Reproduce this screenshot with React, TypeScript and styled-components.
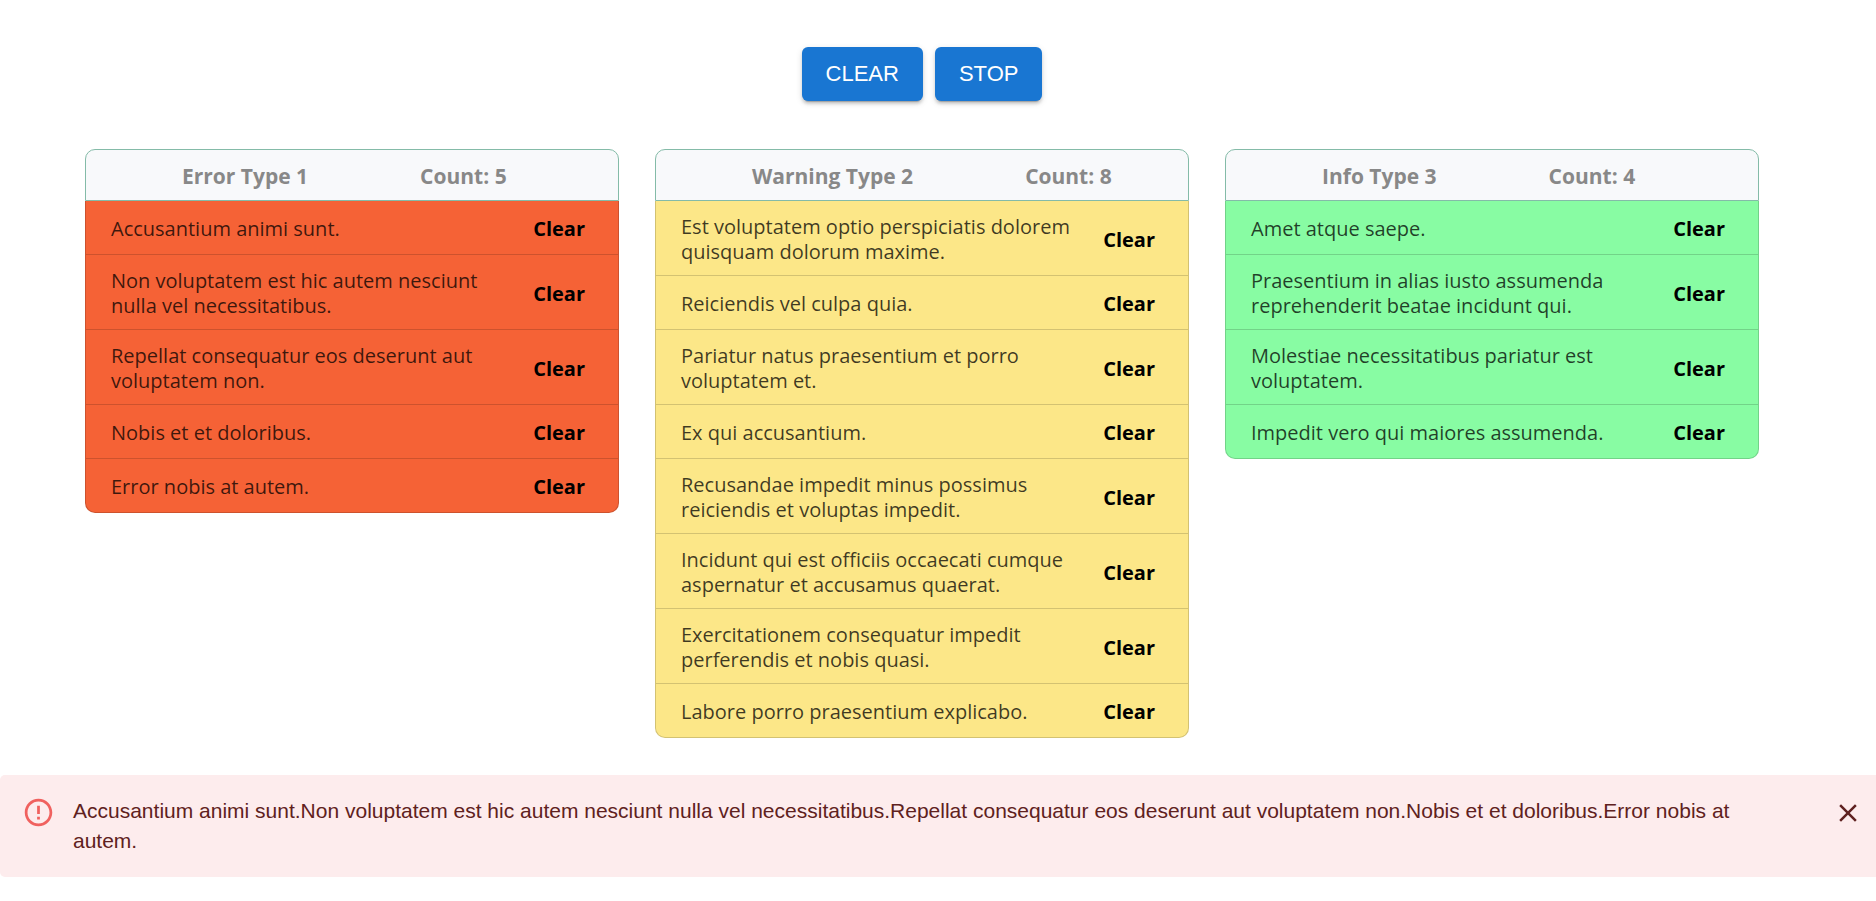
import React, { useState } from "react";
import styled, { createGlobalStyle } from "styled-components";

const GlobalStyle = createGlobalStyle`
  *, *::before, *::after { box-sizing: border-box; }
  body {
    margin: 0;
    background: #ffffff;
    font-family: "Open Sans", "Noto Sans", sans-serif;
  }
`;

const Page = styled.div`
  padding-top: 47px;
`;

const Content = styled.main`
  padding: 0 117px 0 85px;
`;

const Toolbar = styled.div`
  display: flex;
  justify-content: center;
  gap: 12px;
  margin-bottom: 48px;
`;

const ActionButton = styled.button`
  height: 54px;
  padding: 0 24px;
  border: 0;
  border-radius: 6px;
  background: #1976d2;
  color: #ffffff;
  font-family: "Liberation Sans", Arial, sans-serif;
  font-size: 22px;
  line-height: 36px;
  cursor: pointer;
  box-shadow: 0 4px 1px -3px rgba(0, 0, 0, 0.2), 0 3px 3px rgba(0, 0, 0, 0.14),
    0 2px 7px rgba(0, 0, 0, 0.12);
`;

const Columns = styled.div`
  display: grid;
  grid-template-columns: repeat(3, minmax(0, 1fr));
  align-items: start;
  gap: 36px;
`;

const Card = styled.section`
  min-width: 0;
`;

const CardHeader = styled.header`
  display: flex;
  align-items: center;
  gap: 112px;
  height: 52px;
  padding: 2px 24px 0 96px;
  border: 1px solid #84bba8;
  border-radius: 10px 10px 0 0;
  background: #f8f9fb;
  color: #888888;
  font-size: 21px;
  font-weight: 700;
  line-height: 28px;
  white-space: nowrap;
`;

const CardTitle = styled.h2`
  margin: 0;
  font: inherit;
`;

const MessageList = styled.ul<{ $color: string }>`
  margin: 0;
  padding: 0;
  list-style: none;
  overflow: hidden;
  border: 1px solid rgba(0, 0, 0, 0.16);
  border-top: 0;
  border-radius: 0 0 10px 10px;
  background: ${(p) => p.$color};
`;

const MessageRow = styled.li`
  display: flex;
  align-items: center;
  justify-content: space-between;
  gap: 24px;
  min-height: 54px;
  padding: 13px 33px 11px 25px;
  border-bottom: 1px solid rgba(0, 0, 0, 0.16);

  &:last-child {
    min-height: 53px;
    border-bottom: 0;
  }
`;

const MessageText = styled.span`
  color: rgba(0, 0, 0, 0.76);
  font-size: 20px;
  font-weight: 400;
  line-height: 25px;
`;

const RowButton = styled.button`
  flex: none;
  padding: 0;
  border: 0;
  background: none;
  color: #000000;
  font-family: inherit;
  font-size: 20px;
  font-weight: 700;
  line-height: 25px;
  cursor: pointer;
`;

const Alert = styled.div`
  display: flex;
  align-items: flex-start;
  margin-top: 37px;
  padding: 21px 13px 21px 22px;
  border-radius: 5px 0 0 5px;
  background: #fdeced;
  color: #5f2120;
`;

const AlertIcon = styled.svg`
  flex: none;
  width: 33px;
  height: 33px;
  margin-right: 18px;
  fill: #ef5350;
  opacity: 0.9;
`;

const AlertText = styled.p`
  flex: 1;
  margin: 0;
  font-family: "Liberation Sans", Arial, sans-serif;
  font-size: 21px;
  line-height: 30px;
`;

const CloseButton = styled.button`
  display: flex;
  flex: none;
  margin-left: 48px;
  padding: 2px 0 0;
  border: 0;
  background: none;
  color: inherit;
  cursor: pointer;

  svg {
    width: 30px;
    height: 30px;
    fill: currentColor;
  }
`;

type Group = { title: string; color: string; messages: string[] };

const initialGroups: Group[] = [
  {
    title: "Error Type 1",
    color: "#f56236",
    messages: [
      "Accusantium animi sunt.",
      "Non voluptatem est hic autem nesciunt nulla vel necessitatibus.",
      "Repellat consequatur eos deserunt aut voluptatem non.",
      "Nobis et et doloribus.",
      "Error nobis at autem.",
    ],
  },
  {
    title: "Warning Type 2",
    color: "#fce788",
    messages: [
      "Est voluptatem optio perspiciatis dolorem quisquam dolorum maxime.",
      "Reiciendis vel culpa quia.",
      "Pariatur natus praesentium et porro voluptatem et.",
      "Ex qui accusantium.",
      "Recusandae impedit minus possimus reiciendis et voluptas impedit.",
      "Incidunt qui est officiis occaecati cumque aspernatur et accusamus quaerat.",
      "Exercitationem consequatur impedit perferendis et nobis quasi.",
      "Labore porro praesentium explicabo.",
    ],
  },
  {
    title: "Info Type 3",
    color: "#88fca3",
    messages: [
      "Amet atque saepe.",
      "Praesentium in alias iusto assumenda reprehenderit beatae incidunt qui.",
      "Molestiae necessitatibus pariatur est voluptatem.",
      "Impedit vero qui maiores assumenda.",
    ],
  },
];

export default function App() {
  const [groups, setGroups] = useState(initialGroups);
  const [running, setRunning] = useState(true);
  const [alertOpen, setAlertOpen] = useState(true);

  const clearAll = () => setGroups(groups.map((g) => ({ ...g, messages: [] })));
  const clearOne = (title: string, index: number) =>
    setGroups(
      groups.map((g) =>
        g.title === title ? { ...g, messages: g.messages.filter((_, i) => i !== index) } : g
      )
    );

  return (
    <Page>
      <GlobalStyle />
      <Content>
        <Toolbar>
          <ActionButton type="button" onClick={clearAll}>CLEAR</ActionButton>
          <ActionButton type="button" onClick={() => setRunning(!running)}>
            {running ? "STOP" : "START"}
          </ActionButton>
        </Toolbar>
        <Columns>
          {groups.map((group) => (
            <Card key={group.title}>
              <CardHeader>
                <CardTitle>{group.title}</CardTitle>
                <span>Count: {group.messages.length}</span>
              </CardHeader>
              <MessageList $color={group.color}>
                {group.messages.map((message, index) => (
                  <MessageRow key={message}>
                    <MessageText>{message}</MessageText>
                    <RowButton type="button" onClick={() => clearOne(group.title, index)}>
                      Clear
                    </RowButton>
                  </MessageRow>
                ))}
              </MessageList>
            </Card>
          ))}
        </Columns>
      </Content>
      {alertOpen && (
        <Alert role="alert">
          <AlertIcon viewBox="0 0 24 24" aria-hidden="true">
            <path d="M11 15h2v2h-2zm0-8h2v6h-2zm.99-5C6.47 2 2 6.48 2 12s4.47 10 9.99 10C17.52 22 22 17.52 22 12S17.52 2 11.99 2zM12 20c-4.42 0-8-3.58-8-8s3.58-8 8-8 8 3.58 8 8-3.58 8-8 8z" />
          </AlertIcon>
          <AlertText>{groups[0].messages.join("")}</AlertText>
          <CloseButton type="button" aria-label="Close" onClick={() => setAlertOpen(false)}>
            <svg viewBox="0 0 24 24" aria-hidden="true">
              <path d="M19 6.41L17.59 5 12 10.59 6.41 5 5 6.41 10.59 12 5 17.59 6.41 19 12 13.41 17.59 19 19 17.59 13.41 12z" />
            </svg>
          </CloseButton>
        </Alert>
      )}
    </Page>
  );
}
